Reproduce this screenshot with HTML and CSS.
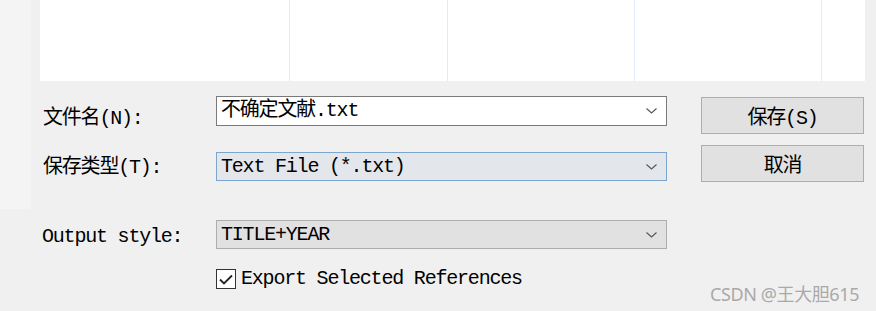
FILE: index.html
```html
<!DOCTYPE html>
<html lang="zh-CN">
<head>
  <meta charset="utf-8">
  <title>保存文献</title>
  <link rel="stylesheet" href="styles.css">
</head>
<body>
  <div class="dialog">
    <div class="top">
      <!-- Левая панель «быстрого доступа», видна только краешек -->
      <div class="places"></div>

      <div class="browser">
        <div class="file-list">
          <div class="col col-name"></div>
          <div class="col col-date"></div>
          <div class="col col-type"></div>
          <div class="col col-size"></div>
          <div class="col col-rest"></div>
        </div>

        <div class="save-row">
          <div class="fields">
            <span class="label label-name">文件名(N):</span>
            <div class="combo combo-edit">
              <span class="combo-text">不确定文献.txt</span>
              <svg class="chevron" width="11" height="6" viewBox="0 0 11 6"><polyline points="0.5,0.5 5.5,5 10.5,0.5" fill="none" stroke="#555" stroke-width="1.1"/></svg>
            </div>

            <span class="label label-type">保存类型(T):</span>
            <div class="combo combo-focus">
              <span class="combo-text">Text File (*.txt)</span>
              <svg class="chevron" width="11" height="6" viewBox="0 0 11 6"><polyline points="0.5,0.5 5.5,5 10.5,0.5" fill="none" stroke="#555" stroke-width="1.1"/></svg>
            </div>
          </div>

          <div class="actions">
            <button class="button" type="button">保存(S)</button>
            <button class="button" type="button">取消</button>
          </div>
        </div>
      </div>
    </div>

    <div class="options">
      <span class="label label-style">Output style:</span>
      <div class="combo combo-list">
        <span class="combo-text">TITLE+YEAR</span>
        <svg class="chevron" width="11" height="6" viewBox="0 0 11 6"><polyline points="0.5,0.5 5.5,5 10.5,0.5" fill="none" stroke="#555" stroke-width="1.1"/></svg>
      </div>

      <label class="check">
        <span class="check-box">
          <svg width="14" height="11" viewBox="0 0 14 11"><polyline points="1,5.5 5,9.5 13,1.5" fill="none" stroke="#222" stroke-width="1.8"/></svg>
        </span>
        <span class="check-title">Export Selected References</span>
      </label>
    </div>

    <div class="watermark">CSDN @王大胆615</div>
  </div>
</body>
</html>
```

FILE: styles.css
```css
* {
  margin: 0;
  padding: 0;
  box-sizing: border-box;
}

body {
  background-color: #f0f0f0;
  color: #000000;
  font-family: "Liberation Mono", "Noto Sans CJK SC", monospace;
  font-size: 20px;
  letter-spacing: -1.2px;
  overflow: hidden;
}

.dialog {
  position: relative;
  width: 876px;
  height: 311px;
}

.top {
  display: flex;
}

.places {
  flex: none;
  width: 31px;
  height: 209px;
  background-color: #f4f4f4;
}

.browser {
  margin-left: 9px;
}

.file-list {
  display: flex;
  width: 825px;
  height: 81px;
  background-color: #ffffff;
}

.col {
  height: 100%;
  border-right: 1px solid #e2ecf8;
}

.col-name { width: 250px; }
.col-date { width: 158px; }
.col-type { width: 187px; }
.col-size { width: 187px; }
.col-rest { flex: 1; border-right: none; }

.save-row {
  display: flex;
  gap: 34px;
  margin-top: 15px;
  padding-left: 3px;
}

.fields {
  display: grid;
  grid-template-columns: 173px 451px;
  row-gap: 20px;
  align-items: start;
}

.label {
  line-height: 24px;
  white-space: nowrap;
}

.label-name {
  padding-top: 11px;
}

.label-type {
  padding-top: 4px;
}

.label-style {
  padding-top: 4px;
}

.combo {
  display: flex;
  align-items: center;
  justify-content: space-between;
  height: 30px;
  padding: 0 9px 0 4px;
  border: 1px solid #adadad;
  background-color: #e1e1e1;
}

.combo-edit {
  border-color: #7a7a7a;
  background-color: #ffffff;
}

.combo-focus {
  height: 29px;
  border-color: #7ea6cc;
  background-color: #e3e6ea;
}

.combo-list {
  height: 29px;
}

.combo-text {
  line-height: 26px;
  white-space: nowrap;
}

.chevron {
  flex: none;
}

.actions {
  display: flex;
  flex-direction: column;
  gap: 11px;
  padding-top: 1px;
}

.button {
  width: 163px;
  height: 37px;
  border: 1px solid #adadad;
  background-color: #e1e1e1;
  color: #000000;
  font-family: inherit;
  font-size: inherit;
  letter-spacing: inherit;
}

.options {
  display: grid;
  grid-template-columns: 174px 451px;
  row-gap: 18px;
  align-items: center;
  padding: 11px 0 0 42px;
}

.check {
  grid-column: 2;
  display: flex;
  align-items: center;
  gap: 5px;
  padding-top: 1px;
}

.check-box {
  display: flex;
  align-items: center;
  justify-content: center;
  width: 20px;
  height: 20px;
  border: 1px solid #333333;
  background-color: #ffffff;
}

.check-title {
  line-height: 22px;
  white-space: nowrap;
}

.watermark {
  position: absolute;
  left: 710px;
  top: 280px;
  color: #a9a9a9;
  font-family: "Noto Sans", "Noto Sans CJK SC", sans-serif;
  font-size: 18px;
  letter-spacing: -0.4px;
  white-space: nowrap;
}
```
